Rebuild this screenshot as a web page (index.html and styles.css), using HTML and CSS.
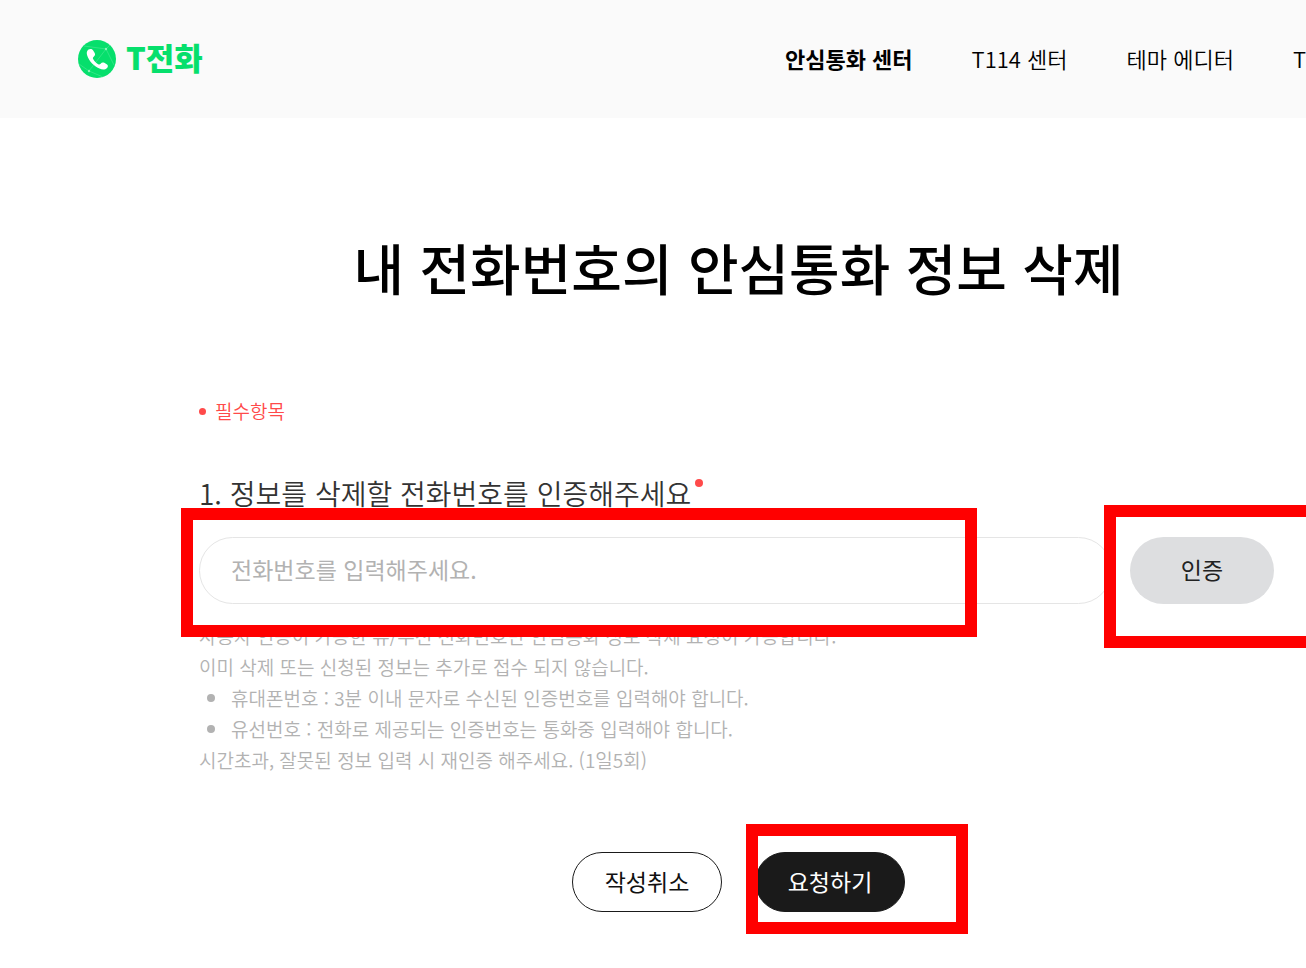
FILE: index.html
```html
<!DOCTYPE html>
<html lang="ko">
<head>
  <meta charset="UTF-8" />
  <meta name="viewport" content="width=device-width, initial-scale=1.0"/>
  <title>T전화 안심통화 센터</title>
  <link rel="stylesheet" href="styles.css">
</head>
<body>
  <header class="header">
    <a class="logo" href="#">
      <svg class="logo-icon" viewBox="0 0 38 38" aria-hidden="true">
        <circle cx="19" cy="19" r="19" fill="#06df6c"/>
        <g fill="none" stroke="#4ce995" stroke-width="0.6">
          <path d="M6 6 28 9 11 31 1 24M28 9l8 16M28 9l4-4M11 31l14 6"/>
        </g>
        <circle cx="28" cy="9" r="1.200" fill="#8df2bb"/>
        <circle cx="11" cy="31" r="1.200" fill="#8df2bb"/>
        <path d="M10.500 9.600C12 8.600 14 8.700 15 10.300L16.700 13C17.600 14.600 16.800 15.800 15.500 16.900C14.700 17.600 14.800 18.400 15.300 19.300C16.400 21.300 18.100 23 20.200 24.200C21.200 24.700 21.900 24.600 22.600 23.700C23.600 22.400 24.900 22 26.300 22.800L28.700 24.200C30.300 25.200 30.200 26.900 29 28.100C27 30.100 24.200 29.900 21.400 28.600C15.800 26 11 21.200 9.200 15.600C8.500 13.200 8.500 11 10.500 9.600Z" fill="#fff"/>
      </svg>
      <span>T전화</span>
    </a>
    <nav class="nav">
      <a class="active" href="#">안심통화 센터</a>
      <a href="#">T114 센터</a>
      <a href="#">테마 에디터</a>
      <a href="#">T</a>
    </nav>
  </header>

  <main class="content">
    <h1>내 전화번호의 안심통화 정보 삭제</h1>

    <form>
      <p class="required">필수항목</p>

      <label class="question" for="phone">1. 정보를 삭제할 전화번호를 인증해주세요</label>
      <div class="phone-row">
        <div class="phone-field">
          <input type="tel" id="phone" placeholder="전화번호를 입력해주세요.">
          <span class="mark mark-input"></span>
        </div>
        <div class="verify">
          <button type="button" class="btn-verify">인증</button>
          <span class="mark mark-verify"></span>
        </div>
      </div>

      <div class="help">
        <p>사용자 인증이 가능한 유/무선 전화번호만 안심통화 정보 삭제 요청이 가능합니다.</p>
        <p>이미 삭제 또는 신청된 정보는 추가로 접수 되지 않습니다.</p>
        <ul>
          <li>휴대폰번호 : 3분 이내 문자로 수신된 인증번호를 입력해야 합니다.</li>
          <li>유선번호 : 전화로 제공되는 인증번호는 통화중 입력해야 합니다.</li>
        </ul>
        <p>시간초과, 잘못된 정보 입력 시 재인증 해주세요. (1일5회)</p>
      </div>

      <div class="actions">
        <button type="button" class="btn">작성취소</button>
        <div class="submit">
          <button type="submit" class="btn btn-dark">요청하기</button>
          <span class="mark mark-submit"></span>
        </div>
      </div>
    </form>
  </main>
</body>
</html>
```
FILE: styles.css
```css
* {
  box-sizing: border-box;
}
body {
  margin: 0;
  background: #fff;
  color: #000;
  font-family: "Noto Sans CJK KR", sans-serif;
  font-weight: 350;
  overflow-x: hidden;
}
h1, p, ul {
  margin: 0;
  padding: 0;
}
a {
  color: inherit;
  text-decoration: none;
}
button, input {
  font: inherit;
}

/* header */
.header {
  display: flex;
  align-items: center;
  justify-content: space-between;
  height: 118px;
  padding-left: 78px;
  background: #fafafa;
}
.logo {
  display: flex;
  align-items: center;
  gap: 10px;
  color: #06df6c;
  font-size: 31px;
  font-weight: 900;
  line-height: 34px;
}
.logo span {
  padding-bottom: 4px;
}
.logo-icon {
  width: 38px;
  height: 38px;
}
.nav {
  display: flex;
  gap: 59px;
  padding-bottom: 3px;
  font-size: 22px;
  line-height: 32px;
  white-space: nowrap;
}
.nav .active {
  font-weight: 700;
}

/* content */
.content {
  padding: 108px 28px 56px 199px;
}
h1 {
  font-size: 55px;
  font-weight: 500;
  line-height: 80px;
  text-align: center;
}
.required {
  display: flex;
  align-items: center;
  gap: 9px;
  margin-top: 90px;
  color: #ff4a4a;
  font-size: 19px;
  line-height: 30px;
}
.required::before {
  content: "";
  width: 7px;
  height: 7px;
  border-radius: 50%;
  background: #ff4a4a;
}
.question {
  display: flex;
  gap: 4px;
  margin-top: 47px;
  color: #333;
  font-size: 28px;
  line-height: 40px;
}
.question::after {
  content: "";
  width: 8px;
  height: 8px;
  margin-top: 6px;
  border-radius: 50%;
  background: #ff4a4a;
}
.phone-row {
  display: flex;
  gap: 18px;
  margin: 24px 4px 0 0;
}
.phone-field {
  position: relative;
  flex: 1;
}
.phone-field input {
  display: block;
  width: 100%;
  height: 67px;
  padding: 0 31px 3px;
  border: 1px solid #e5e5e5;
  border-radius: 34px;
  background: #fff;
  font-size: 23px;
  font-weight: 400;
}
.phone-field input::placeholder {
  color: #b2b2b2;
}
.verify, .submit {
  position: relative;
}
.btn-verify {
  width: 144px;
  height: 67px;
  padding: 0 0 3px;
  border: none;
  border-radius: 34px;
  background: #dddee0;
  color: #222;
  font-size: 23px;
  font-weight: 400;
}

/* help text */
.help {
  margin-top: 16px;
  color: #b2b2b2;
  font-size: 19px;
  line-height: 31px;
}
.help ul {
  list-style: none;
}
.help li {
  display: flex;
  align-items: center;
  gap: 16px;
  padding-left: 8px;
}
.help li::before {
  content: "";
  width: 8px;
  height: 8px;
  border-radius: 50%;
  background: #b2b2b2;
}

/* bottom buttons */
.actions {
  display: flex;
  justify-content: center;
  gap: 33px;
  margin-top: 77px;
}
.btn {
  width: 150px;
  height: 60px;
  padding: 0 0 2px;
  border: 1px solid #1a1a1a;
  border-radius: 30px;
  background: #fff;
  color: #111;
  font-size: 23px;
  font-weight: 400;
}
.btn-dark {
  background: #1a1a1a;
  color: #fff;
}

/* red highlight frames */
.mark {
  position: absolute;
  border: 12px solid #f00;
  pointer-events: none;
}
.mark-input {
  top: -29px;
  right: 135px;
  bottom: -33px;
  left: -18px;
}
.mark-verify {
  top: -32px;
  right: -60px;
  bottom: -44px;
  left: -26px;
}
.mark-submit {
  top: -28px;
  right: -63px;
  bottom: -22px;
  left: -9px;
}
```
